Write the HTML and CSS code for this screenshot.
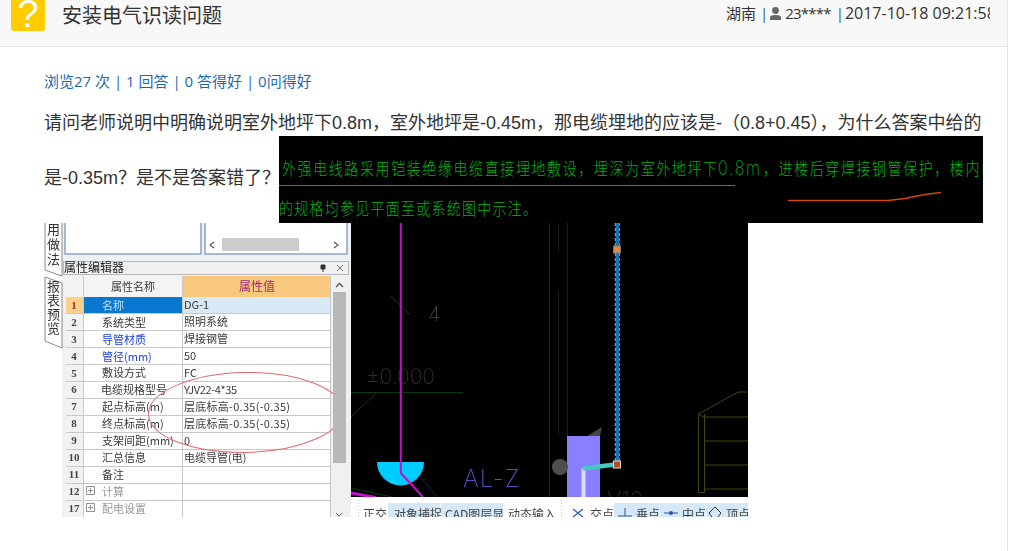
FILE: index.html
```html
<!DOCTYPE html>
<html lang="zh">
<head>
<meta charset="utf-8">
<title>安装电气识读问题</title>
<link rel="stylesheet" href="styles.css">
</head>
<body>
<div class="main">
  <header class="head">
    <div class="head-left">
      <div class="q-icon">?</div>
      <h1 class="title">安装电气识读问题</h1>
    </div>
    <div class="head-meta"><span class="place">湖南</span><span class="pipe">|</span><svg class="user" viewBox="0 0 11 13" width="11" height="13"><circle cx="5.5" cy="3.5" r="3.4"/><path d="M0 13V10.5C0 8.8 2 8 5.5 8S11 8.8 11 10.5V13Z"/></svg><span class="uname">23****</span><span class="pipe">|</span><span class="date">2017-10-18 09:21:58</span></div>
  </header>
  <section class="content">
    <div class="stats">浏览27 次 | 1 回答 | 0 答得好 | 0问得好</div>
    <p class="body-text">请问老师说明中明确说明室外地坪下0.8m，室外地坪是-0.45m，那电缆埋地的应该是-（0.8+0.45），为什么答案中给的是-0.35m？是不是答案错了？<svg class="pic pic-note" viewBox="279 136 704 87" width="704" height="87">
        <rect x="279" y="136" width="704" height="87" fill="#000"/>
        <g transform="translate(0 175) scale(1 1.25)">
          <text class="note" x="282" y="0" textLength="435" lengthAdjust="spacing">外强电线路采用铠装绝缘电缆直接埋地敷设，埋深为室外地坪下</text>
          <text class="note note-latin" x="718" y="0" textLength="42" lengthAdjust="spacing">0.8m</text>
          <text class="note" x="763" y="0" textLength="232" lengthAdjust="spacing">，进楼后穿焊接钢管保护，楼内电</text>
        </g>
        <g transform="translate(0 215) scale(1 1.25)">
          <text class="note" x="279" y="0" textLength="258" lengthAdjust="spacing">的规格均参见平面至或系统图中示注。</text>
        </g>
        <path d="M279 185.500H735" stroke="#c8500f" stroke-width="1" fill="none"/>
        <path d="M788 200.500H888L905 198.500L925 194.500L941 192.500" stroke="#d04a0a" stroke-width="1.600" fill="none"/>
      </svg><svg class="pic pic-soft" viewBox="44 223 704 294" width="704" height="294">
        <rect x="44" y="223" width="704" height="294" fill="#fff"/>
        <rect x="62" y="223" width="289" height="294" fill="#eef0f2"/>
        <path d="M45 223V270L62 276V223" fill="#fff" stroke="#8a8a8a"/>
        <path d="M45 277L62 283V348L45 341Z" fill="#fff" stroke="#8a8a8a"/>
        <text class="tab" x="47" y="234">用</text>
        <text class="tab" x="47" y="249">做</text>
        <text class="tab" x="47" y="264">法</text>
        <text class="tab" x="47" y="291">报</text>
        <text class="tab" x="47" y="305">表</text>
        <text class="tab" x="47" y="319">预</text>
        <text class="tab" x="47" y="333">览</text>
        <path d="M65 223V254H201V223" fill="#fff" stroke="#8ba4c8" stroke-width="1.500"/>
        <path d="M205 223V254H347V223" fill="#fff" stroke="#8ba4c8" stroke-width="1.500"/>
        <rect x="222" y="238" width="77" height="13" fill="#ccc"/>
        <path d="M214 242L210 245L214 248M334 242L338 245L334 248" fill="none" stroke="#555" stroke-width="1.200"/>
        <rect x="63.500" y="261.500" width="285" height="13" fill="#f0f0f0" stroke="#b8b8b8"/>
        <text class="cell cell-bold" x="64" y="272">属性编辑器</text>
        <path d="M321 265h4v4h-4zM323 269v3" fill="#333" stroke="#333"/>
        <path d="M337 265L343 271M343 265L337 271" stroke="#777"/>
        <rect x="66" y="276" width="264" height="241" fill="#fff"/>
        <rect x="66" y="276" width="17" height="241" fill="#f2f2f2"/>
        <rect x="83" y="276" width="99" height="21" fill="#f4f4f4"/>
        <rect x="182" y="276" width="148" height="21" fill="#f8c87c"/>
        <rect x="66" y="297" width="17" height="17" fill="#fbd08c"/>
        <rect x="83" y="297" width="99" height="17" fill="#0a78d0"/>
        <rect x="182" y="297" width="148" height="17" fill="#d8e8f5"/>
        <g class="grid">
          <path d="M66 313.500H330M66 330.500H330M66 347.500H330M66 364.500H330M66 381.500H330M66 398.500H330M66 415.500H330M66 432.500H330M66 449.500H330M66 466.500H330M66 483.500H330M66 500.500H330M83.500 276V517M182.500 276V517M330.500 276V517"/>
        </g>
        <text class="cell" x="111" y="291">属性名称</text>
        <text class="cell cell-val-head" x="239" y="291">属性值</text>
        <g class="cell nums">
          <text x="74" y="309" fill="#a03010">1</text><text x="74" y="326">2</text><text x="74" y="343">3</text><text x="74" y="360">4</text><text x="74" y="377">5</text><text x="74" y="393">6</text><text x="74" y="410">7</text><text x="74" y="427">8</text><text x="74" y="444">9</text><text x="74" y="461">10</text><text x="74" y="478">11</text><text x="74" y="495">12</text><text x="74" y="512">17</text>
        </g>
        <g class="cell">
          <text x="102" y="310" fill="#bfe0fa">名称</text>
          <text x="102" y="327">系统类型</text>
          <text x="102" y="344" fill="#2040e0">导管材质</text>
          <text x="102" y="361" fill="#2040e0">管径(mm)</text>
          <text x="102" y="377">敷设方式</text>
          <text x="101" y="394">电缆规格型号</text>
          <text x="102" y="411">起点标高(m)</text>
          <text x="102" y="428">终点标高(m)</text>
          <text x="102" y="445">支架间距(mm)</text>
          <text x="102" y="462">汇总信息</text>
          <text x="102" y="479">备注</text>
          <text x="102" y="496" fill="#999">计算</text>
          <text x="102" y="513" fill="#999">配电设置</text>
          <text x="184" y="309">DG-1</text>
          <text x="184" y="326">照明系统</text>
          <text x="184" y="343">焊接钢管</text>
          <text x="184" y="360">50</text>
          <text x="184" y="377">FC</text>
          <text x="184" y="394" textLength="53" lengthAdjust="spacing">YJV22-4*35</text>
          <text x="184" y="411" textLength="106" lengthAdjust="spacing">层底标高-0.35(-0.35)</text>
          <text x="184" y="428" textLength="106" lengthAdjust="spacing">层底标高-0.35(-0.35)</text>
          <text x="184" y="445">0</text>
          <text x="184" y="462">电缆导管(电)</text>
        </g>
        <path d="M86.500 486.500h8v8h-8zM88 490.500h5M90.500 488v5M86.500 503.500h8v8h-8zM88 507.500h5M90.500 505v5" fill="#fff" stroke="#777" stroke-width=".8"/>
        <ellipse cx="245.500" cy="412.500" rx="97" ry="40" transform="rotate(-1 245 412)" fill="none" stroke="#e06a6a"/>
        <rect x="333" y="276" width="14" height="241" fill="#f0f0f0"/>
        <rect x="333" y="292" width="13" height="171" fill="#b8b8b8"/>
        <path d="M336 287L339.500 283.500L343 287" fill="none" stroke="#555" stroke-width="1.300"/>
        <path d="M336 513L339 516L342 513" fill="none" stroke="#666"/>
        <rect x="351" y="223" width="397" height="274" fill="#000"/>
        <path d="M549.500 223V497" stroke="#232323"/>
        <path d="M558.500 223V252M558.500 291V435M567.500 223V436" stroke="#1e1e1e"/>
        <path d="M391 296L410 315" stroke="#14302a"/>
        <text class="cad cad-four" x="428" y="321">4</text>
        <text class="cad cad-level" x="366" y="384">±0.000</text>
        <path d="M351 392.500H463M376 393L351 417" stroke="#0c3a10" fill="none"/>
        <path d="M417 473L437 497" stroke="#0d3030" fill="none"/>
        <path d="M377 462H424A23.500 23.500 0 0 1 377 462Z" fill="#00ccff"/>
        <path d="M400.800 223V473L423 497" stroke="#c010c8" stroke-width="2" fill="none"/>
        <path d="M351 493L376 497.500" stroke="#c010c8" stroke-width="3" fill="none"/>
        <path d="M351 488L392 497" stroke="#0c3a10" fill="none"/>
        <text class="cad cad-al" x="463" y="487">AL-Z</text>
        <path d="M738 392L698.500 414V492.500H704.500V414M738 392H748M704 417H748M704 441H748M704 465H748M704 489H748M698 414L704 417" stroke="#45450f" fill="none"/>
        <rect x="567" y="436" width="33" height="61" fill="#8a80ff"/>
        <path d="M587 436L602 427L600 436Z" fill="#444"/>
        <circle cx="560" cy="467" r="8" fill="#4e4e4e"/>
        <path d="M583.500 468.500V497" stroke="#dcdcff" stroke-width="4"/>
        <path d="M583 468.500L615 464.500" stroke="#44c8c4" stroke-width="4.500"/>
        <path d="M617.300 223V462" stroke="#9fb6c6" stroke-width="5" stroke-dasharray="3 2"/>
        <path d="M617.300 223V462" stroke="#1274c0" stroke-width="3.400"/>
        <rect x="613.500" y="246" width="7" height="7" fill="#e08a40" stroke="#777"/>
        <rect x="613.500" y="461" width="7" height="7" fill="#c04820" stroke="#e8d8d0"/>
        <text class="cad cad-ver" x="607" y="507">V12</text>
        <rect x="351" y="497" width="397" height="20" fill="#fff"/>
        <rect x="388" y="503" width="52" height="14" fill="#d5e8f8"/>
        <rect x="441" y="503" width="62" height="14" fill="#d5e8f8"/>
        <rect x="614" y="503" width="45" height="14" fill="#d5e8f8"/>
        <rect x="660" y="503" width="45" height="14" fill="#d5e8f8"/>
        <rect x="706" y="503" width="42" height="14" fill="#d5e8f8"/>
        <path d="M358.500 500V517M561.500 500V517" stroke="#c8c8c8" stroke-dasharray="1 2"/>
        <g class="cell cell-bar">
          <text x="363" y="519">正交</text>
          <text x="394" y="519">对象捕捉</text>
          <text x="445" y="519">CAD图层显</text>
          <text x="508" y="519">动态输入</text>
          <text x="590" y="519">交点</text>
          <text x="636" y="519">垂点</text>
          <text x="682" y="519">中点</text>
          <text x="726" y="519">顶点</text>
        </g>
        <path d="M573 509L583 517M583 509L573 517" stroke="#3a66b0" stroke-width="1.500"/>
        <path d="M618 516H632M625 508V516" stroke="#2a55a8"/>
        <path d="M664 513H678" stroke="#2a55a8"/>
        <circle cx="671" cy="513" r="2" fill="#2a55a8"/>
        <path d="M715 507L721 513L718 517M715 507L709 513L712 517" stroke="#333" fill="none"/>
      </svg></p>
  </section>
</div>
</body>
</html>
```
FILE: styles.css
```css
* { box-sizing: border-box; }
html, body { margin: 0; padding: 0; background: #fff; }
body {
  height: 551px;
  overflow: hidden;
  font-family: "Open Sans", "Noto Sans CJK SC", sans-serif;
  color: #333;
}
.main {
  width: 1008px;
  height: 551px;
  border-right: 1px solid #e5e5e5;
}
.head {
  height: 47px;
  background: #f8f8f8;
  border-bottom: 1px solid #e5e5e5;
  display: flex;
  justify-content: space-between;
  padding-right: 17px;
}
.head-left {
  display: flex;
  align-items: flex-start;
  padding-left: 11px;
}
.q-icon {
  width: 34px;
  height: 31px;
  background: #ffcc00;
  border-radius: 0 0 3px 3px;
  color: #fff;
  font-family: "Liberation Sans", sans-serif;
  font-size: 38px;
  line-height: 28px;
  text-align: center;
}
.title {
  margin: 0 0 0 17px;
  font-size: 20px;
  font-weight: 400;
  line-height: 32px;
  color: #333;
}
.head-meta {
  width: 264px;
  height: 27px;
  overflow: hidden;
  white-space: nowrap;
  font-size: 15px;
  line-height: 27px;
  color: #333;
}
.place { margin-right: 4px; }
.pipe { color: #2a5f90; }
.user { margin: 0 4px 0 2px; vertical-align: -1px; fill: #666; }
.uname { margin-right: 5px; letter-spacing: -0.8px; }
.date { margin-left: 1px; font-size: 16px; }
.content { padding: 21px 17px 0 44px; }
.stats {
  height: 26px;
  font-size: 15px;
  line-height: 26px;
  color: #1a6ab0;
}
.body-text {
  margin: 16px 0 0;
  font-family: "Liberation Sans", "Noto Sans CJK SC", sans-serif;
  font-size: 18px;
  line-height: 26px;
  color: #333;
}
.pic { vertical-align: middle; }
.pic-note { margin-left: -1px; }
.pic-soft { display: block; filter: blur(0.35px); }
.note {
  font-family: "Noto Sans CJK SC", sans-serif;
  font-size: 14px;
  font-weight: 300;
  fill: #00b414;
}
.note-latin { font-family: "Inter", sans-serif; font-weight: 200; font-size: 16px; }
.tab {
  font-family: "Noto Sans CJK SC", sans-serif;
  font-size: 13px;
  fill: #333;
}
.cell {
  font-family: "Noto Sans CJK SC", sans-serif;
  font-size: 11px;
  fill: #3a3a3a;
}
.cell-bold { font-size: 12px; fill: #222; }
.cell-val-head { fill: #a02c70; font-size: 12px; }
.cell-bar { font-size: 12px; fill: #444; }
.nums { font-family: "Liberation Serif", serif; font-weight: 700; font-size: 11px; text-anchor: middle; fill: #444; }
.grid path { stroke: #c8c8c8; fill: none; }
.cad { font-family: "Inter", sans-serif; font-weight: 200; }
.cad-four { font-size: 20px; fill: #444; }
.cad-level { font-size: 21px; fill: #333; }
.cad-al { font-size: 24px; fill: #5a4fc0; letter-spacing: 1px; }
.cad-ver { font-size: 22px; fill: #2e2e2e; }
```
